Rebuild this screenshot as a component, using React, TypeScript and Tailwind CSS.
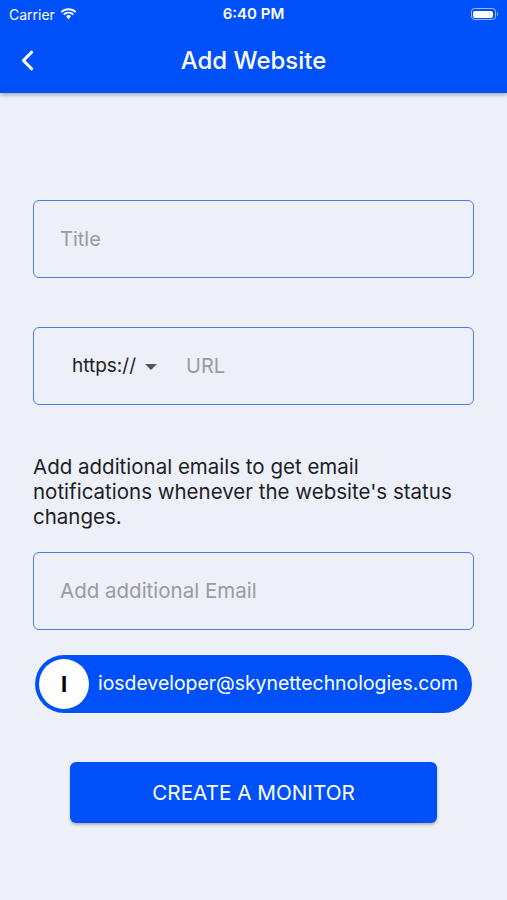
import { ChevronLeft } from "lucide-react";

function StatusBar() {
  return (
    <div className="relative flex h-7 items-center px-[9px] text-white">
      <div className="flex items-center gap-[5px] text-[14px]">
        <span>Carrier</span>
        <svg width="17" height="12" viewBox="0 0 17 12" fill="white">
          <path d="M8.5 2.2c2.5 0 4.8 1 6.5 2.6l1.3-1.3C14.2 1.5 11.5.3 8.5.3S2.8 1.5.7 3.5L2 4.8c1.7-1.6 4-2.6 6.5-2.6z" />
          <path d="M8.5 5.6c1.6 0 3 .6 4.1 1.6l1.3-1.3C12.5 4.5 10.6 3.7 8.5 3.7S4.5 4.5 3.1 5.9l1.3 1.3c1.1-1 2.5-1.6 4.1-1.6z" />
          <path d="M8.5 9 L11 8.1 C10.3 7.5 9.4 7.1 8.5 7.1 S6.7 7.5 6 8.1 L8.5 11.5 L11 8.1Z" />
        </svg>
      </div>
      <div className="absolute left-0 right-0 top-0 flex h-7 items-center justify-center text-[15px] font-semibold">
        6:40 PM
      </div>
      <div className="ml-auto flex items-center">
        <div className="flex h-[12px] w-[25px] items-center rounded-[3.5px] border border-white/60 p-[1.5px]">
          <div className="h-full w-full rounded-[2px] bg-white" />
        </div>
        <div className="ml-[1px] h-[4px] w-[1.5px] rounded-r bg-white/60" />
      </div>
    </div>
  );
}

function Field({ children }: { children: React.ReactNode }) {
  return (
    <div className="flex h-[78px] items-center rounded-[6px] border-[1.5px] border-[#4a7ee8] px-[26px]">
      {children}
    </div>
  );
}

function App() {
  return (
    <div
      className="flex min-h-[900px] w-full flex-col bg-[#edf0f8]"
      style={{ fontFamily: "Inter, 'Noto Sans', sans-serif" }}
    >
      <header className="bg-[#0050fa] shadow-[0_2px_4px_rgba(0,0,0,0.3)]">
        <StatusBar />
        <div className="relative flex h-[65px] items-center justify-center">
          <ChevronLeft
            className="absolute left-[11px] top-[16px] text-white"
            size={33}
            strokeWidth={2.3}
          />
          <h1 className="text-[24px] font-medium text-white">Add Website</h1>
        </div>
      </header>

      <main className="flex flex-col px-[33px] pt-[107px]">
        <Field>
          <span className="text-[20px] text-[#9b9b9f]">Title</span>
        </Field>

        <div className="mt-[49px]">
          <Field>
            <div className="flex items-center pl-[12px]">
              <span className="text-[19px] text-[#222]">https://</span>
              <svg width="12" height="6" viewBox="0 0 12 6" className="ml-[9px] mt-[1px]">
                <path d="M0 0h12L6 6z" fill="#555" />
              </svg>
              <span className="ml-[29px] text-[20px] text-[#9b9b9f]">URL</span>
            </div>
          </Field>
        </div>

        <p className="mt-[49px] text-[20.5px] leading-[25px] text-[#1e1e1e]">
          Add additional emails to get email notifications whenever the
          website's status changes.
        </p>

        <div className="mt-[23px]">
          <Field>
            <span className="text-[20.5px] text-[#9b9b9f]">Add additional Email</span>
          </Field>
        </div>

        <div className="mx-[2px] mt-[25px] flex h-[58px] items-center rounded-full bg-[#0050fa] pl-[4px] pr-[14px]">
          <div className="flex h-[50px] w-[50px] items-center justify-center rounded-full bg-white">
            <span className="text-[22px] font-bold text-black">I</span>
          </div>
          <span className="ml-[9px] text-[19.4px] text-white">
            iosdeveloper@skynettechnologies.com
          </span>
        </div>

        <div className="mt-[49px] flex justify-center">
          <button className="flex h-[61px] w-[367px] items-center justify-center rounded-[6px] bg-[#0050fa] text-[20.7px] text-white shadow-[0_2px_3px_rgba(0,0,0,0.25)]">
            CREATE A MONITOR
          </button>
        </div>
      </main>
    </div>
  );
}

export default App;
